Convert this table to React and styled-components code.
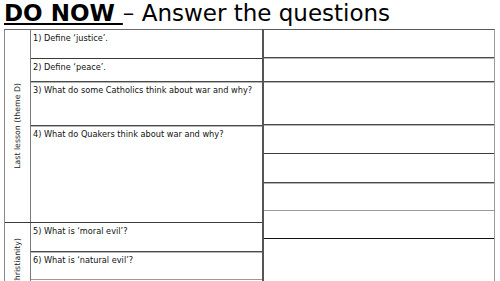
import React from 'react';
import styled, { createGlobalStyle } from 'styled-components';

// 좌측 질문 묶음과 우측 답안 칸
const groups = [
    {
        label: 'Last lesson (theme D)',
        rows: [
            { h: 28, text: '1) Define \u2018justice\u2019.' },
            { h: 23, text: '2) Define \u2018peace\u2019.', line: 'dark' },
            { h: 44, text: '3) What do some Catholics think about war and why?', line: 'double' },
            { h: 97, text: '4) What do Quakers think about war and why?', line: 'double' },
        ],
    },
    {
        label: 'Previous topic (Christianity)',
        top: true,
        rows: [
            { h: 28, text: '5) What is \u2018moral evil\u2019?' },
            { h: 28, text: '6) What is \u2018natural evil\u2019?', line: 'double' },
            { h: 40, text: '', line: 'gray' },
        ],
    },
];

const answerRows = [
    { h: 27 },
    { h: 24, line: 'double' },
    { h: 43, line: 'double' },
    { h: 29, line: 'double' },
    { h: 29, line: 'dark' },
    { h: 28, line: 'double' },
    { h: 28, line: 'gray' },
    { h: 60, line: 'black' },
];

const App = () => (
    <>
        <GlobalStyle />
        <Page>
            <Title>
                <Strong>DO NOW </Strong>&ndash; Answer the questions
            </Title>
            <Sheet>
                <QuestionTable>
                    {groups.map((group, gi) => (
                        <Group key={gi} $first={gi === 0}>
                            <LabelCell $top={group.top}>
                                <Label>{group.label}</Label>
                            </LabelCell>
                            <QuestionColumn>
                                {group.rows.map((row, ri) => (
                                    <QuestionRow key={ri} $h={row.h} $line={ri === 0 ? null : row.line}>
                                        {row.text}
                                    </QuestionRow>
                                ))}
                            </QuestionColumn>
                        </Group>
                    ))}
                </QuestionTable>
                <AnswerTable>
                    {answerRows.map((row, i) => (
                        <AnswerRow key={i} $h={row.h} $line={row.line} />
                    ))}
                </AnswerTable>
            </Sheet>
        </Page>
    </>
);

const GlobalStyle = createGlobalStyle`
  html, body {
    margin: 0;
    padding: 0;
    background: #fff;
    overflow: hidden;
  }
  body {
    font-family: "DejaVu Sans", "Liberation Sans", sans-serif;
    color: #000;
  }
`;

const lineStyle = (line) => {
    switch (line) {
        case 'dark': return 'border-top: 1px solid #3a3a3a;';
        case 'black': return 'border-top: 1px solid #111;';
        case 'gray': return 'border-top: 1px solid #9a9a9a;';
        case 'double': return 'border-top: 1px solid #4a4a4a; box-shadow: inset 0 1px 0 #b4b4b4;';
        default: return 'border-top: none;';
    }
};

const Page = styled.div`
  width: 500px;
  height: 281px;
  overflow: hidden;
`;

const Title = styled.div`
  height: 29px;
  box-sizing: border-box;
  padding: 0 0 2px 4px;
  font-size: 23px;
  line-height: 27px;
  white-space: nowrap;
`;

const Strong = styled.span`
  font-weight: 700;
  text-decoration: underline;
  text-decoration-thickness: 2px;
  text-underline-offset: 2px;
`;

const Sheet = styled.div`
  display: flex;
  padding-left: 4px;
`;

const QuestionTable = styled.div`
  width: 258px;
  box-sizing: border-box;
  border-left: 1px solid #8a8a8a;
  border-top: 1px solid #6a6a6a;
  display: flex;
  flex-direction: column;
`;

const Group = styled.div`
  display: flex;
  border-top: ${p => (p.$first ? 'none' : '1px solid #3a3a3a')};
`;

const LabelCell = styled.div`
  width: 25px;
  flex-shrink: 0;
  border-right: 1px solid #7a7a7a;
  display: flex;
  flex-direction: column;
  align-items: center;
  justify-content: ${p => (p.$top ? 'flex-start' : 'center')};
  padding-top: ${p => (p.$top ? '15px' : '0')};
  overflow: hidden;
`;

const Label = styled.span`
  writing-mode: vertical-rl;
  transform: rotate(180deg);
  font-size: 7.8px;
  white-space: nowrap;
  color: #222;
`;

const QuestionColumn = styled.div`
  flex: 1;
  display: flex;
  flex-direction: column;
`;

const QuestionRow = styled.div`
  height: ${p => p.$h}px;
  box-sizing: border-box;
  ${p => lineStyle(p.$line)}
  padding: 4px 2px 0 2px;
  font-size: 8.2px;
  line-height: 9px;
  color: #111;
  white-space: nowrap;
`;

const AnswerTable = styled.div`
  width: 233px;
  box-sizing: border-box;
  border-left: 2px solid #555;
  border-right: 1px solid #9a9a9a;
  border-top: 1px solid #5a5a5a;
  display: flex;
  flex-direction: column;
`;

const AnswerRow = styled.div`
  height: ${p => p.$h}px;
  flex-shrink: 0;
  box-sizing: border-box;
  ${p => lineStyle(p.$line)}
`;

export default App;
